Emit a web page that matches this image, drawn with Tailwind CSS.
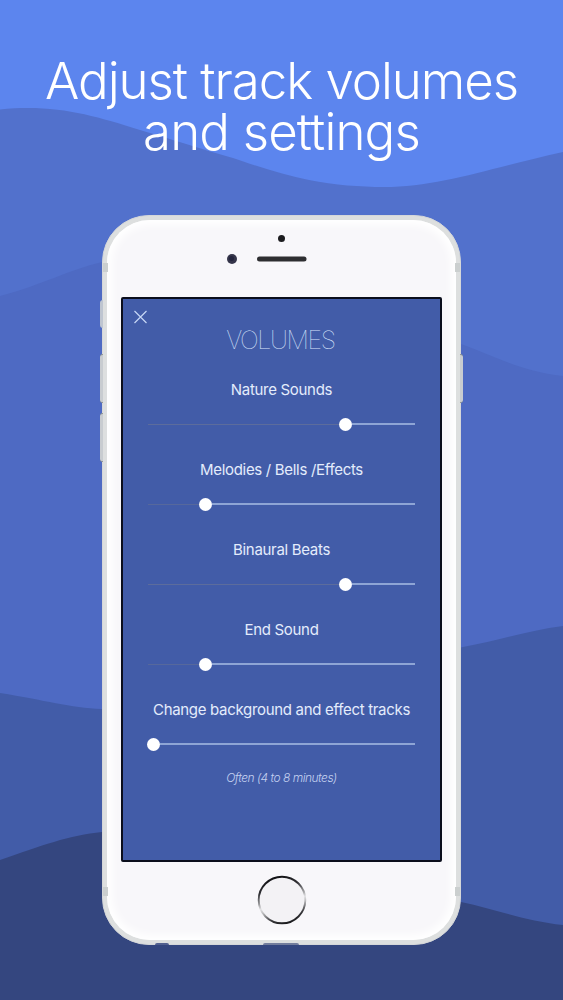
<!DOCTYPE html>
<html lang="en">
<head>
<meta charset="utf-8">
<title>Volumes</title>
<script src="https://cdn.jsdelivr.net/npm/@tailwindcss/browser@4"></script>
</head>
<body class="bg-[#34467f]">
<main class="relative isolate flex h-[1000px] w-[563px] flex-col items-center overflow-hidden font-['Inter',sans-serif] text-white">
  <!-- layered waves -->
  <svg class="absolute inset-0 -z-10" width="563" height="1000" viewBox="0 0 563 1000">
    <rect width="563" height="1000" fill="#5c85ee"/>
    <path fill="#5271cc" d="M0 109.500C55 104 92 115 140 130C180 142 205 150 233 158C262 168 285 175 309 180C335 185 360 187 384 187C440 187 490 168 563 152V1000H0Z"/>
    <path fill="#4e6ac3" d="M0 296C45 284 65 271 102 262C300 230 370 300 461 344C495 356 520 371 563 376V1000H0Z"/>
    <path fill="#425ca8" d="M0 693C45 700 70 708 102 709C250 725 350 670 463 647C500 640 530 630 563 626V1000H0Z"/>
    <path fill="#34467f" d="M0 860C40 846 70 835 102 832C220 820 360 880 461 902C495 909 525 921 563 925V1000H0Z"/>
  </svg>

  <h1 class="mt-[55px] text-center text-[51px] leading-[51px] font-light whitespace-nowrap"><span class="block tracking-[-1.05px]">Adjust track volumes</span><span class="block tracking-[-0.85px]">and settings</span></h1>

  <section class="relative mt-[58px] flex h-[730px] w-[359px] flex-col items-center rounded-[47px] border border-[#d5d7d9] bg-[#dddfdf] p-[4px]">
    <i class="absolute top-[84px] -left-[3px] h-[28px] w-[3px] rounded-l-sm bg-[#bec5d0]"></i>
    <i class="absolute top-[138px] -left-[3px] h-[49px] w-[3px] rounded-l-sm border-y border-[#8e948f] bg-[#c8ccd0]"></i>
    <i class="absolute top-[197px] -left-[3px] h-[49px] w-[3px] rounded-l-sm border-y border-[#8e948f] bg-[#c8ccd0]"></i>
    <i class="absolute top-[138px] -right-[3px] h-[49px] w-[3px] rounded-r-sm border-y border-[#8e948f] bg-[#c8ccd0]"></i>
    <i class="absolute top-[47px] left-0 h-[9px] w-[5px] bg-[#cbcfcf]"></i>
    <i class="absolute top-[47px] right-0 h-[9px] w-[5px] bg-[#cbcfcf]"></i>
    <i class="absolute bottom-[48px] left-0 h-[9px] w-[5px] bg-[#cbcfcf]"></i>
    <i class="absolute right-0 bottom-[48px] h-[9px] w-[5px] bg-[#cbcfcf]"></i>
    <i class="absolute -bottom-px left-[52px] h-[2px] w-[14px] rounded-t-full bg-[#526090]"></i>
    <i class="absolute -bottom-px left-[160px] h-[2px] w-[36px] rounded-t-full bg-[#737d9d]"></i>

    <div class="flex h-full w-full flex-col items-center rounded-[43px] bg-[#f8f7fa] shadow-[inset_0_0_9px_5px_#ffffff]">
      <svg class="shrink-0" width="349" height="77" viewBox="0 0 349 77">
        <circle cx="174.500" cy="18.500" r="3.500" fill="#1c1c1f"/>
        <circle cx="125" cy="39" r="5" fill="#35354a"/>
        <circle cx="124.500" cy="38.500" r="2.500" fill="#24253d"/>
        <rect x="150" y="36.500" width="49.500" height="5" rx="2.500" fill="#2e2e31"/>
      </svg>

      <div class="flex h-[565px] w-[321px] shrink-0 flex-col items-center rounded-[2px] border-2 border-[#0b0e1c] bg-[#425ca8]">
        <svg class="mt-[11px] ml-[10.500px] shrink-0 self-start" width="13" height="14" viewBox="0 0 13 14" fill="none" stroke="#c6d6f5" stroke-width="1.200"><path d="M.5 1L12.500 13M12.500 1L.5 13"/></svg>
        <h2 class="mt-[1px] -ml-[2px] h-[30px] text-[25px] leading-[30px] font-thin tracking-[-1.400px] text-[#d9e4fc]">VOLUMES</h2>

        <div class="mt-[25px] flex w-[267px] flex-col text-[15px] tracking-[-0.310px] text-[#e4ecfc]">
          <div class="flex h-20 flex-col items-center">
            <span class="h-5 leading-5 whitespace-nowrap">Nature Sounds</span>
            <div class="mt-[17.500px] flex h-[13px] w-full items-center"><i class="h-px w-[191px] bg-[#5c6c9c]"></i><b class="size-[13px] rounded-full bg-white"></b><i class="h-[2px] flex-1 bg-[#8ea5d5]"></i></div>
          </div>
          <div class="flex h-20 flex-col items-center">
            <span class="h-5 leading-5 whitespace-nowrap">Melodies / Bells /Effects</span>
            <div class="mt-[17.500px] flex h-[13px] w-full items-center"><i class="h-px w-[51px] bg-[#56689c]"></i><b class="size-[13px] rounded-full bg-white"></b><i class="h-[2px] flex-1 bg-[#8ea5d5]"></i></div>
          </div>
          <div class="flex h-20 flex-col items-center">
            <span class="h-5 leading-5 whitespace-nowrap">Binaural Beats</span>
            <div class="mt-[17.500px] flex h-[13px] w-full items-center"><i class="h-px w-[191px] bg-[#5c6c9c]"></i><b class="size-[13px] rounded-full bg-white"></b><i class="h-[2px] flex-1 bg-[#8ea5d5]"></i></div>
          </div>
          <div class="flex h-20 flex-col items-center">
            <span class="h-5 leading-5 whitespace-nowrap">End Sound</span>
            <div class="mt-[17.500px] flex h-[13px] w-full items-center"><i class="h-px w-[51px] bg-[#56689c]"></i><b class="size-[13px] rounded-full bg-white"></b><i class="h-[2px] flex-1 bg-[#8ea5d5]"></i></div>
          </div>
          <div class="flex flex-col items-center">
            <span class="h-5 leading-5 whitespace-nowrap">Change background and effect tracks</span>
            <div class="mt-[17.500px] flex h-[13px] w-full items-center"><b class="-ml-px size-[13px] rounded-full bg-white"></b><i class="h-[2px] flex-1 bg-[#8ea5d5]"></i></div>
            <em class="mt-[19.500px] h-4 text-[12px] leading-4 font-light tracking-[-0.500px] text-[#c4d1f0]">Often (4 to 8 minutes)</em>
          </div>
        </div>
      </div>

      <svg class="mt-[13px] shrink-0" width="50" height="50" viewBox="0 0 50 50">
        <defs><linearGradient id="ring" x1=".35" y1="0" x2=".65" y2="1">
          <stop offset="0" stop-color="#111114"/><stop offset=".25" stop-color="#303034"/><stop offset=".46" stop-color="#a0a0a2"/><stop offset=".56" stop-color="#e2e2e4"/><stop offset=".66" stop-color="#b8b8ba"/><stop offset=".84" stop-color="#3a3a3d"/><stop offset="1" stop-color="#19191c"/>
        </linearGradient></defs>
        <circle cx="25" cy="25" r="23.300" fill="#f3f2f5" stroke="url(#ring)" stroke-width="1.900"/>
      </svg>
    </div>
  </section>
</main>
</body>
</html>
